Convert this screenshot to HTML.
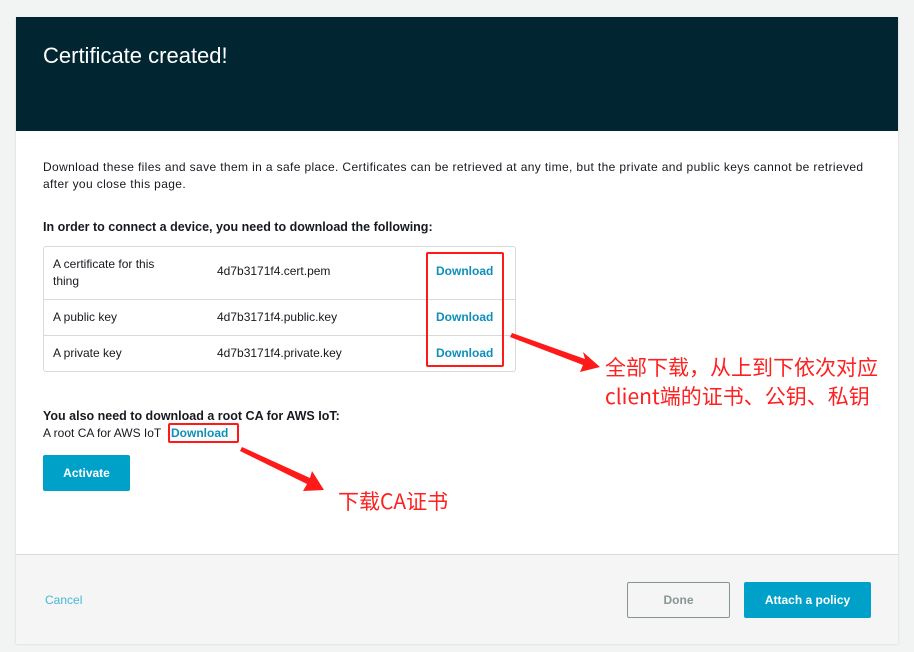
<!DOCTYPE html>
<html><head><meta charset="utf-8"><style>
body{margin:0;width:914px;height:652px;background:#f2f3f3;font-family:"Liberation Sans","Noto Sans CJK SC",sans-serif;position:relative;overflow:hidden;color:#16191f}
.a{position:absolute}
.card{left:16px;top:17px;width:882px;height:626px;background:#fff;box-shadow:0 1px 2px rgba(0,0,0,.15)}
.hdr{left:16px;top:17px;width:882px;height:114px;background:#012632}
.t{font-size:12px;white-space:nowrap}
.dl{color:#0e8fba;font-weight:bold;font-size:12px}
.red{border:2px solid #ff1a1a;border-radius:2px}
.cn{color:#ff2020;font-size:21px;white-space:nowrap;font-family:"Noto Sans CJK SC",sans-serif}
</style></head><body>
<div class="a card"></div>
<div class="a hdr"></div>
<div class="a" style="left:43px;top:43px;color:#fff;font-size:22px">Certificate created!</div>
<div class="a t" style="left:43px;top:159px;line-height:17px;letter-spacing:0.37px">Download these files and save them in a safe place. Certificates can be retrieved at any time, but the private and public keys cannot be retrieved<br>after you close this page.</div>
<div class="a t" style="left:43px;top:220px;font-weight:bold;font-size:12.5px">In order to connect a device, you need to download the following:</div>
<div class="a" style="left:43px;top:246px;width:471px;height:124px;border:1px solid #d5dbdb;border-radius:3px"></div>
<div class="a" style="left:44px;top:299px;width:471px;height:1px;background:#d5dbdb"></div>
<div class="a" style="left:44px;top:335px;width:471px;height:1px;background:#d5dbdb"></div>
<div class="a t" style="left:53px;top:256px;line-height:17px">A certificate for this<br>thing</div>
<div class="a t" style="left:217px;top:264px">4d7b3171f4.cert.pem</div>
<div class="a t" style="left:53px;top:310px">A public key</div>
<div class="a t" style="left:217px;top:310px">4d7b3171f4.public.key</div>
<div class="a t" style="left:53px;top:346px">A private key</div>
<div class="a t" style="left:217px;top:346px">4d7b3171f4.private.key</div>
<div class="a dl" style="left:436px;top:264px">Download</div>
<div class="a dl" style="left:436px;top:310px">Download</div>
<div class="a dl" style="left:436px;top:346px">Download</div>
<div class="a red" style="left:426px;top:252px;width:74px;height:111px"></div>
<div class="a t" style="left:43px;top:409px;font-weight:bold;font-size:12.5px">You also need to download a root CA for AWS IoT:</div>
<div class="a t" style="left:43px;top:426px">A root CA for AWS IoT</div>
<div class="a dl" style="left:171px;top:426px">Download</div>
<div class="a red" style="left:168px;top:423px;width:67px;height:16px"></div>
<div class="a" style="left:43px;top:455px;width:87px;height:36px;background:#00a1c9;border-radius:2px;color:#fff;font-weight:bold;font-size:12px;text-align:center;line-height:36px">Activate</div>
<svg class="a" style="left:0;top:0" width="914" height="652">
<polygon points="512,333 585,359 583,352 600,367 580,372 583,365 510,337" fill="#ff1a1a"/>
<polygon points="242,447 310,478 312,471 324,490 303,491 307,484 240,451" fill="#ff1a1a"/>
</svg>
<div class="a cn" style="left:605px;top:353px;line-height:29px">全部下载，从上到下依次对应<br>client端的证书、公钥、私钥</div>
<div class="a cn" style="left:338px;top:486px">下载CA证书</div>
<div class="a" style="left:16px;top:554px;width:882px;height:89px;background:#f5f5f5;border-top:1px solid #d5dbdb"></div>
<div class="a t" style="left:45px;top:593px;color:#44b9d6">Cancel</div>
<div class="a" style="left:627px;top:582px;width:101px;height:34px;border:1px solid #879596;border-radius:2px;color:#879596;font-weight:bold;font-size:12px;text-align:center;line-height:34px">Done</div>
<div class="a" style="left:744px;top:582px;width:127px;height:36px;background:#00a1c9;border-radius:2px;color:#fff;font-weight:bold;font-size:12px;text-align:center;line-height:36px">Attach a policy</div>
</body></html>
